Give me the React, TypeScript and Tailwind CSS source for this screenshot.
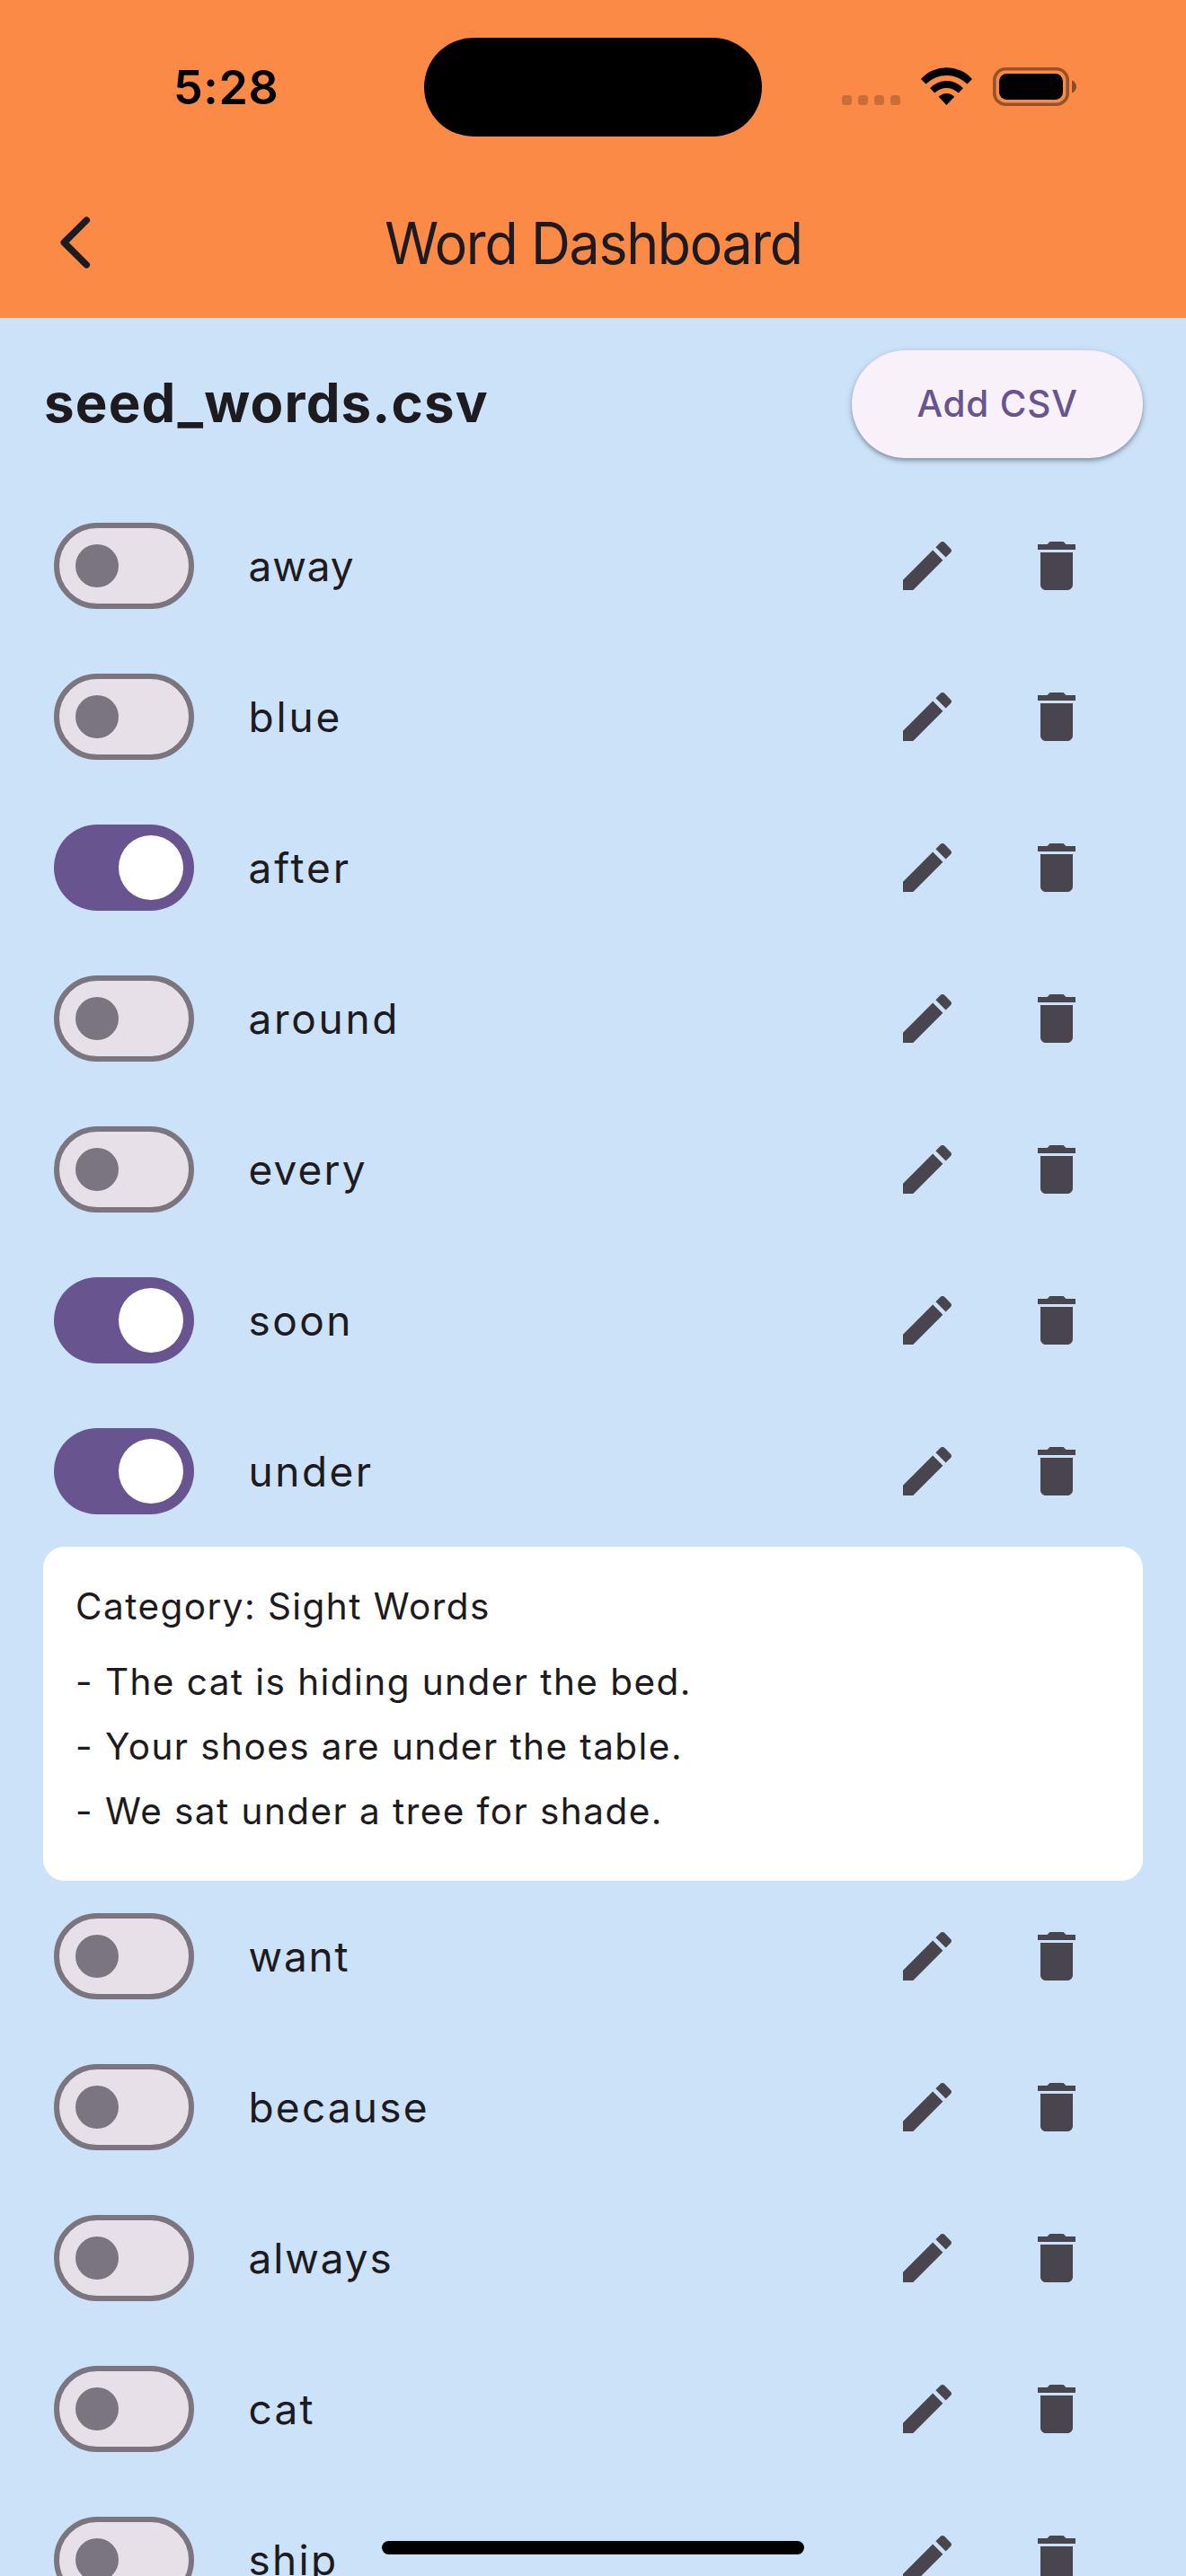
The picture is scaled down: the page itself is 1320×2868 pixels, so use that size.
import React from 'react';

type Word = { text: string; on?: boolean; tracking: string; open?: boolean };

const words: Word[] = [
  { text: 'away', tracking: 'tracking-[0.9px]' },
  { text: 'blue', tracking: 'tracking-[2.8px]' },
  { text: 'after', on: true, tracking: 'tracking-[2.9px]' },
  { text: 'around', tracking: 'tracking-[2.7px]' },
  { text: 'every', tracking: 'tracking-[2.1px]' },
  { text: 'soon', on: true, tracking: 'tracking-[2.4px]' },
  { text: 'under', on: true, tracking: 'tracking-[2.5px]', open: true },
  { text: 'want', tracking: 'tracking-[1.8px]' },
  { text: 'because', tracking: 'tracking-[2.2px]' },
  { text: 'always', tracking: 'tracking-[1.9px]' },
  { text: 'cat', tracking: 'tracking-[2.2px]' },
  { text: 'ship', tracking: 'tracking-[2.3px]' },
];

const sentences = [
  'The cat is hiding under the bed.',
  'Your shoes are under the table.',
  'We sat under a tree for shade.',
];

function StatusBar() {
  return (
    <div className="flex h-[186px] items-start text-black">
      <div className="w-[472px] pt-[66px] pl-[193px]">
        <span className="block text-[52px] leading-[64px] font-semibold tracking-[0.6px]">5:28</span>
      </div>
      <div className="mt-[42px] h-[110px] w-[376px] rounded-[55px] bg-black" />
      <div className="mt-[75px] ml-[89px] flex h-[43px] items-start">
        <div className="mt-[31px] flex gap-[7px]">
          {[0, 1, 2, 3].map((i) => (
            <span key={i} className="h-[11px] w-[11px] rounded-[3.5px] bg-black/20" />
          ))}
        </div>
        <svg className="ml-[23px] h-[42px] w-[57px]" viewBox="0 0 57 42" fill="currentColor">
          <path d="M0 13A38 38 0 0 1 57 13L51.5 18.5A32.6 32.6 0 0 0 5.5 18.5Z" />
          <path d="M10 23.2A25 25 0 0 1 47 23.2L41.7 28.6A18.2 18.2 0 0 0 15.3 28.6Z" />
          <path d="M19.7 32.8A12 12 0 0 1 37.3 32.8L28.5 42Z" />
        </svg>
        <svg className="ml-[23px] h-[43px] w-[93px]" viewBox="0 0 93 43">
          <rect x="1.8" y="1.8" width="81.4" height="39.4" rx="12.5" fill="none" stroke="#000" strokeOpacity="0.4" strokeWidth="3.6" />
          <rect x="7" y="7" width="71" height="29" rx="8.5" />
          <path d="M88 14.5C91 15.5 93 18.2 93 21.5S91 27.5 88 28.5Z" fillOpacity="0.45" />
        </svg>
      </div>
    </div>
  );
}

function Toggle({ on }: { on?: boolean }) {
  return on ? (
    <div className="flex h-24 w-[156px] items-center justify-end rounded-full bg-[#68548e] pr-3">
      <span className="h-[72px] w-[72px] rounded-full bg-white" />
    </div>
  ) : (
    <div className="flex h-24 w-[156px] items-center rounded-full border-[6px] border-[#7b757f] bg-[#e7e0e8] pl-[18px]">
      <span className="h-12 w-12 rounded-full bg-[#7b757f]" />
    </div>
  );
}

function WordRow({ word }: { word: Word }) {
  return (
    <div className="flex h-[168px] shrink-0 items-center pr-[72px] pl-[60px]">
      <Toggle on={word.on} />
      <span className={`ml-[60.5px] flex-1 text-[46px] leading-[72px] ${word.tracking}`}>{word.text}</span>
      <div className="flex text-[#49454e]">
        <button className="flex h-36 w-36 items-center justify-center">
          <svg className="h-[72px] w-[72px]" viewBox="0 0 24 24" fill="currentColor">
            <path d="M3 17.25V21h3.75L17.81 9.94l-3.75-3.75L3 17.25zM20.71 7.04c.39-.39.39-1.02 0-1.41l-2.34-2.34c-.39-.39-1.02-.39-1.41 0l-1.83 1.83 3.75 3.75 1.83-1.83z" />
          </svg>
        </button>
        <button className="flex h-36 w-36 items-center justify-center">
          <svg className="h-[72px] w-[72px]" viewBox="0 0 24 24" fill="currentColor">
            <path d="M6 19c0 1.1.9 2 2 2h8c1.1 0 2-.9 2-2V7H6v12zM19 4h-3.5l-1-1h-5l-1 1H5v2h14V4z" />
          </svg>
        </button>
      </div>
    </div>
  );
}

function WordDetails() {
  return (
    <div className="mx-12 h-[372px] shrink-0 rounded-3xl bg-white px-9 pt-[37px] text-[40.5px] leading-[60px] tracking-[1.43px]">
      <p>Category: Sight Words</p>
      <ul className="mt-[18px]">
        {sentences.map((s) => (
          <li key={s} className="py-1.5">- {s}</li>
        ))}
      </ul>
    </div>
  );
}

export default function App() {
  return (
    <div className="relative flex h-[2868px] w-[1320px] flex-col overflow-hidden bg-[#cce2f9] font-['Inter','Liberation_Sans',sans-serif] text-[#1d1b20]">
      <header className="h-[354px] shrink-0 bg-[#fa8a45]">
        <StatusBar />
        <div className="flex h-[168px] items-center justify-between px-[60px]">
          <svg className="h-[60px] w-[48px]" viewBox="0 0 48 60" fill="none" stroke="currentColor" strokeWidth="7.5" strokeLinecap="round" strokeLinejoin="round">
            <path d="M36.3 5.2L11.3 30L36.3 54.8" />
          </svg>
          <h1 className="scale-x-[0.95] pt-px text-[64px] leading-[84px] font-normal tracking-[-1.4px]">Word Dashboard</h1>
          <span className="w-[48px]" />
        </div>
      </header>
      <div className="flex h-48 shrink-0 items-center justify-between px-12">
        <h2 className="pb-1 pl-[1px] text-[60px] leading-[72px] font-bold tracking-[1.14px]">seed_words.csv</h2>
        <button className="h-[120px] w-[324px] rounded-full bg-[#f8f1fa] text-[40.5px] font-medium tracking-[0.77px] text-[#68548e] shadow-[0_3px_4px_rgba(0,0,0,0.25),0_2px_9px_rgba(0,0,0,0.14)]">
          Add CSV
        </button>
      </div>
      <main className="flex flex-col">
        {words.map((w) => (
          <React.Fragment key={w.text}>
            <WordRow word={w} />
            {w.open && <WordDetails />}
          </React.Fragment>
        ))}
      </main>
      <div className="absolute bottom-6 left-1/2 h-[15px] w-[470px] -translate-x-1/2 rounded-full bg-black" />
    </div>
  );
}
